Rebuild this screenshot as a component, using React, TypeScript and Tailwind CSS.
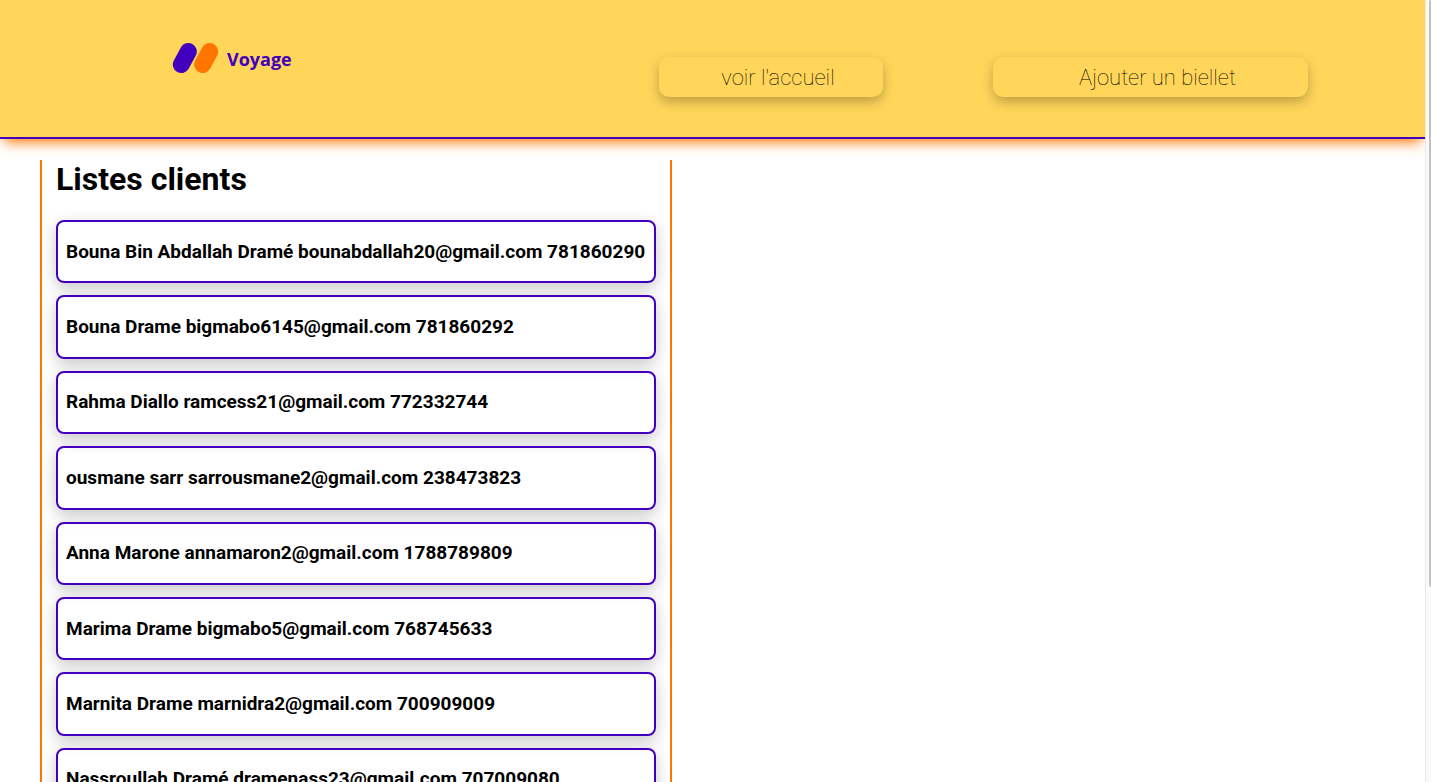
const clients = [
  { name: "Bouna Bin Abdallah Dramé", email: "bounabdallah20@gmail.com", phone: "781860290" },
  { name: "Bouna Drame", email: "bigmabo6145@gmail.com", phone: "781860292" },
  { name: "Rahma Diallo", email: "ramcess21@gmail.com", phone: "772332744" },
  { name: "ousmane sarr", email: "sarrousmane2@gmail.com", phone: "238473823" },
  { name: "Anna Marone", email: "annamaron2@gmail.com", phone: "1788789809" },
  { name: "Marima Drame", email: "bigmabo5@gmail.com", phone: "768745633" },
  { name: "Marnita Drame", email: "marnidra2@gmail.com", phone: "700909009" },
  { name: "Nassroullah Dramé", email: "dramenass23@gmail.com", phone: "707009080" },
];

function Logo() {
  return (
    <a href="#" className="mt-10 ml-[172px] flex h-9 items-center gap-2">
      <svg width="47" height="32" viewBox="0 0 47 32" aria-hidden="true">
        <line x1="9.3" y1="22.5" x2="16.3" y2="9.5" stroke="#4200be" strokeWidth="17" strokeLinecap="round" />
        <line x1="30.7" y1="22.5" x2="37.7" y2="9.5" stroke="#ff7500" strokeWidth="17" strokeLinecap="round" />
      </svg>
      <span className="pt-0.5 font-['Open_Sans',sans-serif] text-lg leading-6 font-bold text-[#4200be]">Voyage</span>
    </a>
  );
}

function Header() {
  return (
    <header className="relative flex h-[139px] shrink-0 items-start justify-between border-b-2 border-[#4200be] bg-[#ffd55a] shadow-[0_7px_12px_-4px_#ff7500]">
      <Logo />
      <nav className="mt-[57px] mr-[117px] flex gap-[110px] text-[22px] leading-[42px] font-thin">
        <a href="#" className="h-10 w-56 rounded-[10px] pl-3.5 text-center shadow-[0_5px_12px_#00000040]">
          voir l'accueil
        </a>
        <a href="#" className="h-10 w-[315px] rounded-[10px] pl-3.5 text-center shadow-[0_5px_12px_#00000040]">
          Ajouter un biellet
        </a>
      </nav>
    </header>
  );
}

export default function App() {
  return (
    <div className="flex h-screen overflow-hidden bg-white font-['Roboto',sans-serif] text-black">
      <div className="flex min-w-0 flex-1 flex-col overflow-hidden">
        <Header />
        <main className="mt-[21px] ml-10 w-[632px] shrink-0 border-x-2 border-[#ff7500] px-3.5">
          <h1 className="text-[32px] leading-[38px] font-bold">Listes clients</h1>
          <ul className="mt-[22px] grid h-[591px] auto-rows-fr gap-3">
            {clients.map((client) => (
              <li
                key={client.email}
                className="flex items-center rounded-lg border-2 border-[#4200be] px-2 shadow-[0_5px_15px_#00000038]"
              >
                <h3 className="text-[19px] leading-[22px] font-bold whitespace-nowrap">
                  {client.name} {client.email} {client.phone}
                </h3>
              </li>
            ))}
          </ul>
        </main>
      </div>
      <div className="w-1.5 shrink-0 border-l border-[#e8e8e8] bg-[#fafafa] pl-[3px]" aria-hidden="true">
        <div className="h-3/4 rounded-l-sm bg-[#c1c1c1]" />
      </div>
    </div>
  );
}
